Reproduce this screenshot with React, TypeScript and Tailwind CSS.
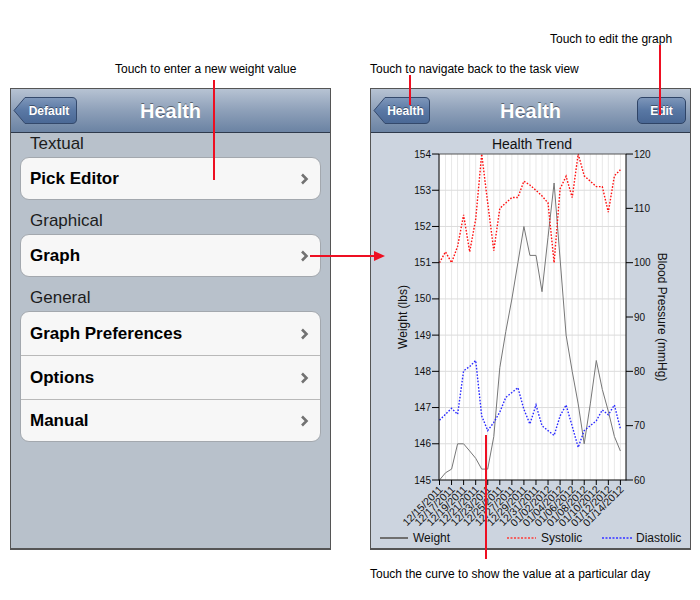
import { useId } from 'react'

const RED = '#ee0f22'

const weight = [
  145.0, 145.2, 145.3, 146.0, 146.0, 145.8, 145.6, 145.3, 145.3, 146.2, 148.1, 149.1, 150.0, 151.0, 152.0, 151.2,
  151.2, 150.2, 151.7, 153.2, 151.1, 149.0, 148.0, 147.1, 146.0, 147.1, 148.3, 147.5, 146.9, 146.2, 145.8,
]
const systolic = [
  100, 102, 100, 103, 108.8, 102, 108, 120, 111, 102.2, 110, 111, 112, 112, 115, 114.3, 113.3, 112.3, 111, 100, 113.6,
  115.9, 112, 120, 116, 115, 114, 114, 109.3, 116, 117.1,
]
const diastolic = [
  71, 72.1, 73.2, 72.1, 80.1, 80.9, 82, 71.8, 69.1, 70.6, 72.5, 75.2, 76.1, 77, 73, 70.3, 73.8, 70, 69.1, 68.2, 71.8,
  73.8, 69.9, 66, 69.1, 70, 70.9, 72.9, 72, 73.8, 69.4,
]
const dates = [
  '12/15/2011', '12/17/2011', '12/19/2011', '12/21/2011', '12/23/2011', '12/25/2011', '12/27/2011', '12/29/2011',
  '12/31/2011', '01/02/2012', '01/04/2012', '01/06/2012', '01/08/2012', '01/10/2012', '01/12/2012', '01/14/2012',
]

const L = 68
const R = 255
const T = 21
const B = 347
const xAt = (i: number) => L + 0.5 + i * 6.03
const yW = (v: number) => B - (v - 145) * 36.22
const yB = (v: number) => B - (v - 60) * 5.433

function pts(values: number[], y: (v: number) => number) {
  return values.map((v, i) => `${xAt(i).toFixed(1)},${y(v).toFixed(1)}`).join(' ')
}

function Chevron() {
  return (
    <svg width="9" height="12" viewBox="0 0 9 12">
      <path d="M2 1.5 L6.5 6 L2 10.5" fill="none" stroke="#727272" strokeWidth="2.6" />
    </svg>
  )
}

function BackButton({ label, width }: { label: string; width: number }) {
  const id = useId()
  const h = 27
  return (
    <div className="relative flex items-center justify-center pl-[8px]" style={{ width, height: h }}>
      <svg className="absolute inset-0" width={width} height={h} viewBox={`0 0 ${width} ${h}`}>
        <defs>
          <linearGradient id={id} x1="0" y1="0" x2="0" y2="1">
            <stop offset="0" stopColor="#7f98bb" />
            <stop offset="0.5" stopColor="#5a78a4" />
            <stop offset="1" stopColor="#4a6895" />
          </linearGradient>
        </defs>
        <path
          d={`M1 ${h / 2} L12 0.5 H${width - 5} Q${width - 0.5} 0.5 ${width - 0.5} 5 V${h - 5} Q${width - 0.5} ${h - 0.5} ${width - 5} ${h - 0.5} H12 Z`}
          fill={`url(#${id})`}
          stroke="#34496b"
        />
      </svg>
      <span className="relative text-[12px] font-bold text-white [text-shadow:0_-1px_0_rgba(0,0,0,0.4)]">{label}</span>
    </div>
  )
}

function NavBar({ back, backWidth, right }: { back: string; backWidth: number; right?: string }) {
  return (
    <div className="relative flex h-[44px] items-center justify-between border-b border-[#2e3a4c] bg-gradient-to-b from-[#b7c3d3] via-[#8ea0b9] to-[#6b83a3] pl-[2px] pr-[4px]">
      <BackButton label={back} width={backWidth} />
      <div className="absolute inset-x-0 top-0 flex h-full items-center justify-center text-[20px] font-bold text-white [text-shadow:0_-1px_0_rgba(0,0,0,0.45)]">
        Health
      </div>
      {right && (
        <div className="relative flex h-[27px] w-[49px] items-center justify-center rounded-[5px] border border-[#2f4466] bg-gradient-to-b from-[#7d96b9] via-[#5877a3] to-[#496794] text-[12px] font-bold text-white [text-shadow:0_-1px_0_rgba(0,0,0,0.4)]">
          {right}
        </div>
      )}
    </div>
  )
}

function Row({ label, last }: { label: string; last?: boolean }) {
  return (
    <div
      className={`flex items-center justify-between pl-[9px] pr-[11px] text-[17px] font-bold text-black ${last ? 'h-[41px]' : 'h-[44px] border-b border-[#b9b9b9]'}`}
    >
      <span>{label}</span>
      <Chevron />
    </div>
  )
}

function Section({ title, rows, first }: { title: string; rows: string[]; first?: boolean }) {
  return (
    <div className={first ? 'mt-[1px]' : 'mt-[11px]'}>
      <div className="pl-[10px] text-[17px] leading-[20px] text-[#1c1c1c]">{title}</div>
      <div className="mt-[3px] overflow-hidden rounded-[9px] border border-[#a3a8ae] bg-[#f7f7f7]">
        {rows.map((r, i) => (
          <Row key={r} label={r} last={i === rows.length - 1} />
        ))}
      </div>
    </div>
  )
}

function Chart() {
  const weightTicks = [145, 146, 147, 148, 149, 150, 151, 152, 153, 154]
  const bpTicks = [60, 70, 80, 90, 100, 110, 120]
  return (
    <svg width="318" height="414" viewBox="0 0 318 414" className="block">
      <text x="161" y="16" textAnchor="middle" fontSize="14" fill="#111">
        Health Trend
      </text>
      <rect x={L} y={T} width={R - L} height={B - T} fill="#fff" />
      {Array.from({ length: 31 }, (_, i) => (
        <line key={i} x1={xAt(i)} x2={xAt(i)} y1={T} y2={B} stroke="#e8e8e8" strokeWidth="1" />
      ))}
      {weightTicks.slice(1, -1).map((v) => (
        <line key={v} x1={L} x2={R} y1={yW(v)} y2={yW(v)} stroke="#dcdcdc" strokeWidth="1" />
      ))}
      <polyline points={pts(weight, yW)} fill="none" stroke="#777" strokeWidth="1" />
      <polyline points={pts(systolic, yB)} fill="none" stroke="#ff1010" strokeWidth="1.4" strokeDasharray="1.6 1.6" />
      <polyline points={pts(diastolic, yB)} fill="none" stroke="#2a2aff" strokeWidth="1.4" strokeDasharray="1.6 1.6" />
      <line x1={L} x2={R} y1={T} y2={T} stroke="#555" />
      <line x1={L} x2={L} y1={T} y2={B + 0.5} stroke="#000" />
      <line x1={R} x2={R} y1={T} y2={B + 0.5} stroke="#000" />
      <line x1={L} x2={R} y1={B} y2={B} stroke="#000" />
      {weightTicks.map((v) => (
        <g key={v}>
          <line x1={L - 7} x2={L} y1={yW(v)} y2={yW(v)} stroke="#000" />
          <text x={L - 8} y={yW(v) + 3.5} textAnchor="end" fontSize="10" fill="#111">
            {v}
          </text>
        </g>
      ))}
      {bpTicks.map((v) => (
        <g key={v}>
          <line x1={R} x2={R + 7} y1={yB(v)} y2={yB(v)} stroke="#000" />
          <text x={R + 8} y={yB(v) + 3.5} fontSize="10" fill="#111">
            {v}
          </text>
        </g>
      ))}
      {dates.map((d, k) => {
        const x = xAt(k * 2)
        return (
          <g key={d}>
            <line x1={x} x2={x} y1={B} y2={B + 5} stroke="#000" />
            <text x={x + 4} y={B + 10} textAnchor="end" fontSize="10.5" fill="#111" transform={`rotate(-45 ${x + 4} ${B + 10})`}>
              {d}
            </text>
          </g>
        )
      })}
      <text x="0" y="0" textAnchor="middle" fontSize="12" fill="#111" transform="translate(36 184) rotate(-90)">
        Weight (lbs)
      </text>
      <text x="0" y="0" textAnchor="middle" fontSize="12" fill="#111" transform="translate(287 184) rotate(90)">
        Blood Pressure (mmHg)
      </text>
      <line x1="9" x2="37" y1="405" y2="405" stroke="#6f6f6f" strokeWidth="2" />
      <text x="42" y="409" fontSize="12" fill="#111">
        Weight
      </text>
      <line x1="136" x2="165" y1="405" y2="405" stroke="#f26060" strokeWidth="2" strokeDasharray="2 1.5" />
      <text x="170" y="409" fontSize="12" fill="#111">
        Systolic
      </text>
      <line x1="231" x2="261" y1="405" y2="405" stroke="#5a5aff" strokeWidth="2" strokeDasharray="2 1.5" />
      <text x="265" y="409" fontSize="12" fill="#111">
        Diastolic
      </text>
    </svg>
  )
}

export default function App() {
  return (
    <div className="relative h-[600px] w-[700px] overflow-hidden bg-white font-['Liberation_Sans',Arial,sans-serif]">
      <div className="flex gap-[39px] pl-[10px] pt-[88px]">
        <div className="flex h-[462px] w-[321px] flex-col border border-b-2 border-[#555]">
          <NavBar back="Default" backWidth={64} />
          <div className="flex-1 bg-[#b8c1cb] px-[9px]">
            <Section title="Textual" rows={['Pick Editor']} first />
            <Section title="Graphical" rows={['Graph']} />
            <Section title="General" rows={['Graph Preferences', 'Options', 'Manual']} />
          </div>
        </div>
        <div className="flex h-[462px] w-[321px] flex-col border border-b-2 border-[#555]">
          <NavBar back="Health" backWidth={57} right="Edit" />
          <div className="flex-1 bg-[#ccd4df]">
            <Chart />
          </div>
        </div>
      </div>

      {/* callouts */}
      <div className="absolute left-[115px] top-[60px] text-[12px] text-black">Touch to enter a new weight value</div>
      <div className="absolute left-[213px] top-[80px] h-[100px] w-[2px] bg-[#ee0f22]" />

      <div className="absolute left-[370px] top-[60px] text-[12px] text-black">Touch to navigate back to the task view</div>
      <div className="absolute left-[409px] top-[75px] h-[30px] w-[2px] bg-[#ee0f22]" />

      <div className="absolute left-[550px] top-[30px] text-[12px] text-black">Touch to edit the graph</div>
      <div className="absolute left-[659px] top-[45px] h-[70px] w-[2px] bg-[#ee0f22]" />

      <svg className="absolute left-[308px] top-[250px]" width="80" height="12" viewBox="0 0 80 12">
        <line x1="2" x2="68" y1="6" y2="6" stroke={RED} strokeWidth="2" />
        <path d="M66 1 L77 6 L66 11 Z" fill={RED} />
      </svg>

      <div className="absolute left-[485px] top-[435px] h-[124px] w-[2px] bg-[#ee0f22]" />
      <div className="absolute left-[370px] top-[565px] text-[12px] text-black">
        Touch the curve to show the value at a particular day
      </div>
    </div>
  )
}
